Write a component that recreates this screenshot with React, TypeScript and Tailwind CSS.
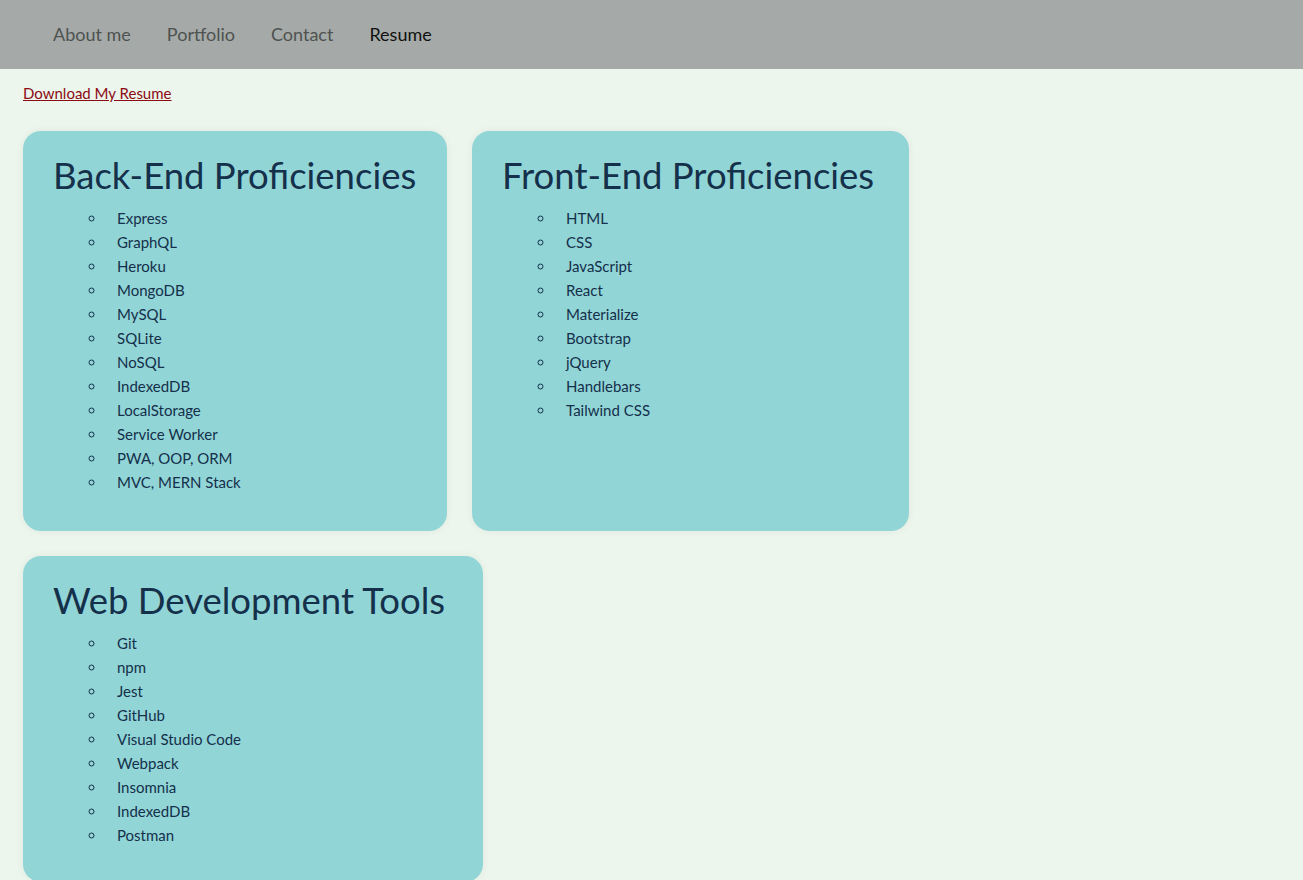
import React from "react";

const cards = [
  {
    title: "Back-End Proficiencies",
    w: "w-[424px]",
    h: "h-[400px]",
    items: ["Express", "GraphQL", "Heroku", "MongoDB", "MySQL", "SQLite", "NoSQL", "IndexedDB", "LocalStorage", "Service Worker", "PWA, OOP, ORM", "MVC, MERN Stack"],
  },
  {
    title: "Front-End Proficiencies",
    w: "w-[437px]",
    h: "h-[400px]",
    items: ["HTML", "CSS", "JavaScript", "React", "Materialize", "Bootstrap", "jQuery", "Handlebars", "Tailwind CSS"],
  },
  {
    title: "Web Development Tools",
    w: "w-[460px]",
    h: "h-[326px]",
    items: ["Git", "npm", "Jest", "GitHub", "Visual Studio Code", "Webpack", "Insomnia", "IndexedDB", "Postman"],
  },
];

export default function App() {
  return (
    <div className="min-h-[880px] bg-[#ecf6ec] font-['Lato',sans-serif]">
      <nav className="h-[69px] bg-[#a5aaa8] flex items-center pl-[53px] gap-[36px] text-[18px]">
        <a className="text-[#4e5250]">About me</a>
        <a className="text-[#4e5250]">Portfolio</a>
        <a className="text-[#4e5250]">Contact</a>
        <a className="text-[#111]">Resume</a>
      </nav>
      <div className="px-[23px] pt-[12px]">
        <a href="#" className="text-[15px] text-[#8b0a14] underline leading-[20px]">Download My Resume</a>
      </div>
      <div className="flex flex-wrap gap-x-[25px] gap-y-[25px] px-[23px] pt-[26px] pb-[10px]">
        {cards.map((c) => (
          <div key={c.title} className={`${c.w} ${c.h} bg-[#92d5d7] rounded-[18px] shadow-[0_0_8px_rgba(0,0,0,0.06)] pl-[30px] pr-[20px] pt-[21px] text-[#14304a]`}>
            <h2 className="text-[36.5px] leading-[46px] whitespace-nowrap">{c.title}</h2>
            <ul className="list-[circle] pl-[53px] mt-[8px] text-[15px] leading-[24px]">
              {c.items.map((i) => (
                <li key={i} className="pl-[11px]">{i}</li>
              ))}
            </ul>
          </div>
        ))}
      </div>
    </div>
  );
}
